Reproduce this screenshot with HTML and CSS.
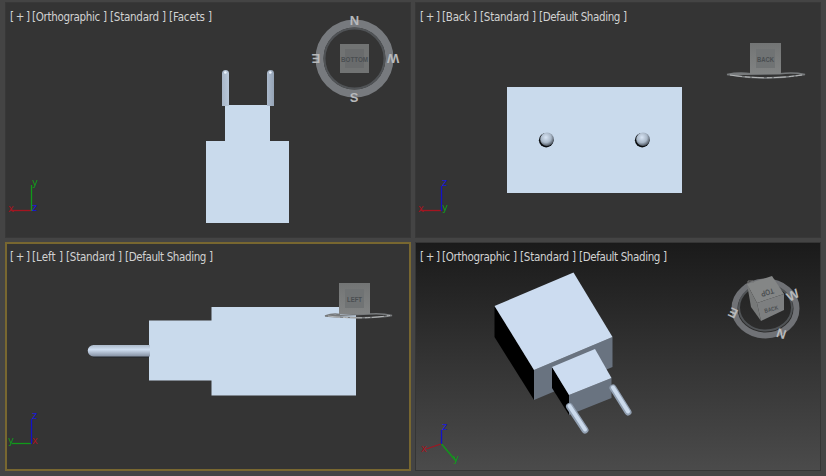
FILE: index.html
```
<!DOCTYPE html>
<html lang="en">
<head>
<meta charset="utf-8">
<title>Viewports</title>
<link rel="stylesheet" href="styles.css">
</head>
<body>
<main class="viewports">
  <section class="viewport">
    <svg class="scene" viewBox="5 2 406 236">
      <defs>
        <linearGradient id="pinV"><stop offset="0" stop-color="#a9b7c8"/><stop offset=".25" stop-color="#c6d5e7"/><stop offset=".7" stop-color="#c6d5e7"/><stop offset="1" stop-color="#95a3b5"/></linearGradient>
        <linearGradient id="pinH" x2="0" y2="1"><stop offset="0" stop-color="#acbacb"/><stop offset=".4" stop-color="#d0dff2"/><stop offset="1" stop-color="#8490a2"/></linearGradient>
        <radialGradient id="ball" cx=".42" cy=".36" r=".64"><stop offset="0" stop-color="#d8e5f5"/><stop offset=".6" stop-color="#a9b7c7"/><stop offset="1" stop-color="#4a525c"/></radialGradient>
        <linearGradient id="face" x2="0" y2="1"><stop offset="0" stop-color="#737575"/><stop offset="1" stop-color="#818383"/></linearGradient>
      </defs>
      <g class="label">
        <text x="10" y="21" textLength="20">[+]</text><text x="32" y="21" textLength="75">[Orthographic ]</text><text x="110" y="21" textLength="56">[Standard ]</text><text x="169" y="21" textLength="43">[Facets ]</text>
      </g>
      <path class="solid" d="M225 105h45v36h19v82h-83v-82h19z"/>
      <path fill="url(#pinV)" d="M222 106V73.500a3.500 3.500 0 0 1 7 0V106zM267 106V73.500a3.500 3.500 0 0 1 7 0V106z"/>
      <circle cx="225.300" cy="72.500" r="1.300" fill="#eef5ff"/><circle cx="270.300" cy="72.500" r="1.300" fill="#eef5ff"/>
      <circle class="ring" cx="354.500" cy="58.500" r="35"/>
      <circle class="ring-inner" cx="354.500" cy="58.500" r="30"/>
      <rect x="340" y="44" width="29" height="29" fill="#717373"/><rect x="345" y="49" width="19" height="19" fill="#696b6c"/>
      <text class="face-name" x="341" y="62" textLength="27" lengthAdjust="spacingAndGlyphs">BOTTOM</text>
      <g class="compass"><text x="354.500" y="25">N</text><text x="354" y="102">S</text><text transform="translate(316 53.500) rotate(180)">E</text><text transform="translate(393 53.500) rotate(180)">W</text></g>
      <path class="axis-x" d="M11 210.500H31"/><path class="axis-y" d="M31.500 185V211"/>
      <g class="axis-name"><text class="x" x="8" y="212">x</text><text class="y" x="32" y="186">y</text><text class="z" x="32" y="211">z</text></g>
    </svg>
  </section>

  <section class="viewport">
    <svg class="scene" viewBox="415 2 406 236">
      <g class="label">
        <text x="420" y="21" textLength="20">[+]</text><text x="442" y="21" textLength="35">[Back ]</text><text x="480" y="21" textLength="56">[Standard ]</text><text x="539" y="21" textLength="88">[Default Shading ]</text>
      </g>
      <rect class="solid" x="507" y="87" width="175" height="106"/>
      <circle cx="546.200" cy="140.200" r="7.300" fill="#080b0e"/><circle cx="642.200" cy="140.200" r="7.300" fill="#080b0e"/>
      <circle cx="547" cy="139.300" r="6.800" fill="url(#ball)"/><circle cx="643" cy="139.300" r="6.800" fill="url(#ball)"/>
      <path class="disc" d="M727 74.500Q739 72 751 73.800M780 73.800Q793 72 805 74.500Q766 81.500 727 74.500z"/>
      <path class="disc-edge" d="M730 75Q766 80.500 802 75"/>
      <rect x="750" y="43" width="31" height="31" fill="url(#face)"/><rect x="756" y="49" width="19" height="19" fill="#707374"/>
      <text class="face-name" x="757" y="62" textLength="17" lengthAdjust="spacingAndGlyphs">BACK</text>
      <path class="axis-x" d="M421 210.500H441"/><path class="axis-z" d="M441.500 186V211"/>
      <g class="axis-name"><text class="x" x="418" y="212">x</text><text class="z" x="442" y="186">z</text><text class="y" x="442" y="211">y</text></g>
    </svg>
  </section>

  <section class="viewport viewport--active">
    <svg class="scene" viewBox="5 242 406 229">
      <g class="label">
        <text x="10" y="261" textLength="20">[+]</text><text x="32" y="261" textLength="31">[Left ]</text><text x="66" y="261" textLength="56">[Standard ]</text><text x="125" y="261" textLength="88">[Default Shading ]</text>
      </g>
      <path d="M93 357H149" stroke="#1e252d" stroke-width="1"/>
      <path class="solid" d="M149 320.500h62.500V307H356v88.500H211.500V380.500H149z"/>
      <path fill="url(#pinH)" d="M150 345H93.500a5.700 5.700 0 0 0 0 11.500H150z"/>
      <path class="disc" d="M325 316Q333 313 340 314.500M369 314Q382 313 392 315.500Q370 319.500 325 316z"/>
      <path class="disc-edge" d="M328 316Q360 320 390 315.500"/>
      <rect x="339" y="283" width="31" height="31" fill="url(#face)"/><rect x="345" y="289" width="19" height="19" fill="#707374"/>
      <text class="face-name" x="347" y="302" textLength="15" lengthAdjust="spacingAndGlyphs">LEFT</text>
      <path class="axis-y" d="M12 443.500H31"/><path class="axis-z" d="M31.500 419V444"/>
      <g class="axis-name"><text class="y" x="8" y="444">y</text><text class="z" x="32" y="419">z</text><text class="x" x="32" y="444">x</text></g>
    </svg>
  </section>

  <section class="viewport viewport--shaded">
    <svg class="scene" viewBox="415 242 406 229">
      <g class="label">
        <text x="420" y="261" textLength="20">[+]</text><text x="442" y="261" textLength="75">[Orthographic ]</text><text x="520" y="261" textLength="56">[Standard ]</text><text x="579" y="261" textLength="88">[Default Shading ]</text>
      </g>
      <path d="M494.500 306L534 370V400L494.500 337z"/>
      <path fill="#697380" d="M534 370L612.500 337V367L534 400z"/>
      <path fill="#ccdcf0" d="M494.500 306L573.500 272.500L612.500 337L534 370z"/>
      <path d="M552 367L569 395V415L552 388z"/>
      <path fill="#697380" d="M569 395L611.500 378V398L569 415z"/>
      <path fill="#ccdcf0" d="M552 367L595 349L611.500 378L569 395z"/>
      <path class="pin-diagonal" d="M569.500 406.500L585 430M613 388L628 412"/>
      <path class="pin-light" d="M569.500 406L585 429.500M613 387.500L628 411.500"/>
      <ellipse class="ring ring--tilted" cx="765.500" cy="308.500" rx="31" ry="27"/>
      <ellipse class="ring-inner" cx="765.500" cy="307.500" rx="26.500" ry="23"/>
      <path fill="#848686" d="M747 284L772 276L784 294L757 303z"/>
      <path fill="#777979" d="M747 284L757 303L761 321L751 307z"/>
      <path fill="#7d7f80" d="M757 303L784 294V310L761 321z"/>
      <path fill="none" stroke="#777" d="M748 284v-3h5v2"/>
      <g class="face-name"><text transform="translate(773 288) rotate(164)" textLength="13" lengthAdjust="spacingAndGlyphs">TOP</text><text class="small" transform="translate(765 313) rotate(-15)" textLength="14" lengthAdjust="spacingAndGlyphs">BACK</text></g>
      <g class="compass"><text transform="translate(795 299) rotate(-28)">W</text><text transform="translate(731 317) rotate(25) scale(-1 1)">E</text><text transform="translate(780 338) rotate(18)">N</text></g>
      <path class="axis-z" d="M441.500 430V444"/><path class="axis-x" d="M441 444L426 449"/><path class="axis-y" d="M441.500 444L456 461"/>
      <g class="axis-name"><text class="z" x="442" y="430">z</text><text class="x" x="421" y="452">x</text><text class="y" x="453" y="462">y</text></g>
    </svg>
  </section>
</main>
</body>
</html>
```
FILE: styles.css
```
body {
  margin: 0;
  background: #444;
}

.viewports {
  display: grid;
  grid-template-columns: 406px 406px;
  grid-template-rows: 236px 229px;
  gap: 4px;
  padding: 2px 5px 5px;
  box-sizing: border-box;
  width: 826px;
  height: 476px;
}

.viewport {
  background: #343434;
  box-shadow: inset 0 0 0 1px #383838;
  overflow: hidden;
}

.viewport--active {
  box-shadow: inset 0 0 0 2px #786730;
}

.viewport--shaded {
  background: linear-gradient(#1a1a1a, #4b4b4b);
  box-shadow: inset 0 0 0 1px #353535;
}

.scene {
  display: block;
  width: 100%;
  height: 100%;
}

.label {
  font: 11.5px "DejaVu Sans Condensed", "DejaVu Sans", sans-serif;
  fill: #d2d2d2;
}

.solid { fill: #c9daec; }

.ring {
  fill: none;
  stroke: #777a7e;
  stroke-width: 8;
}

.ring--tilted {
  stroke: #707276;
  stroke-width: 6;
}

.ring-inner {
  fill: none;
  stroke: #505356;
  stroke-width: 2;
}

.face-name {
  font: bold 8px "Liberation Sans", sans-serif;
  fill: #4a4e51;
}

.small { font-size: 6px; }

.compass {
  font: bold 13px "Liberation Sans", sans-serif;
  fill: #b7b9bb;
  text-anchor: middle;
}

.disc {
  fill: none;
  stroke: #777a7c;
  stroke-width: 1.5;
}

.disc-edge {
  fill: none;
  stroke: #b5b7b8;
  stroke-width: 1;
  stroke-dasharray: 12 3 5 2;
}

.pin-diagonal,
.pin-light {
  fill: none;
  stroke: #92a0b2;
  stroke-width: 7;
  stroke-linecap: round;
}

.pin-light {
  stroke: #cbdaec;
  stroke-width: 4;
}

.axis-x, .axis-y, .axis-z { fill: none; stroke-width: 1.3; }
.axis-x { stroke: #a51420; }
.axis-y { stroke: #109a1a; }
.axis-z { stroke: #1212c8; }

.axis-name { font: 11px "DejaVu Sans Condensed", "DejaVu Sans", sans-serif; }
.x { fill: #a51420; }
.y { fill: #109a1a; }
.z { fill: #1818dc; }
```
